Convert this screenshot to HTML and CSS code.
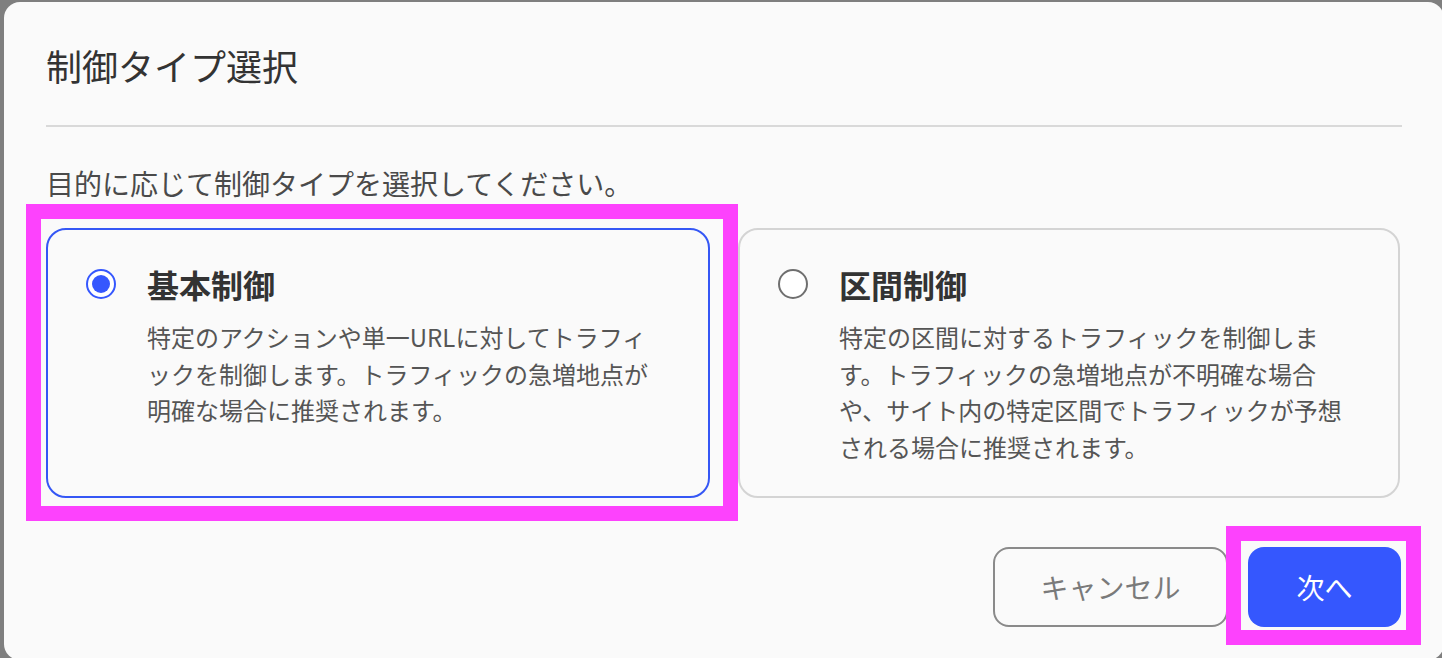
FILE: index.html
```html
<!DOCTYPE html>
<html lang="ja">
<head>
<meta charset="utf-8">
<title>制御タイプ選択</title>
<link rel="stylesheet" href="styles.css">
</head>
<body>
<div class="dialog">
  <h1 class="dialog-title">制御タイプ選択</h1>
  <hr class="divider">
  <p class="lead">目的に応じて制御タイプを選択してください。</p>
  <div class="options">
    <div class="option option-selected">
      <span class="radio radio-on"><span class="radio-dot"></span></span>
      <div class="option-body">
        <div class="option-title">基本制御</div>
        <p class="option-desc">特定のアクションや単一URLに対してトラフィックを制御します。トラフィックの急増地点が明確な場合に推奨されます。</p>
      </div>
      <span class="highlight highlight-card"></span>
    </div>
    <div class="option">
      <span class="radio"></span>
      <div class="option-body">
        <div class="option-title">区間制御</div>
        <p class="option-desc">特定の区間に対するトラフィックを制御します。トラフィックの急増地点が不明確な場合や、サイト内の特定区間でトラフィックが予想される場合に推奨されます。</p>
      </div>
    </div>
  </div>
  <div class="footer">
    <button class="btn btn-cancel">キャンセル</button>
    <div class="btn-wrap">
      <button class="btn btn-primary">次へ</button>
      <span class="highlight highlight-btn"></span>
    </div>
  </div>
</div>
</body>
</html>
```
FILE: styles.css
```css
* { box-sizing: border-box; }

html, body {
  margin: 0;
  padding: 0;
  height: 100%;
  overflow: hidden;
}

body {
  background: #7f7f7f;
  font-family: "Noto Sans CJK JP", "Noto Sans", sans-serif;
  padding: 2px 0 0 4px;
}

.dialog {
  width: 1440px;
  height: 658px;
  background: #fafafa;
  border-radius: 16px;
  padding: 39px 42px 0 42px;
}

.dialog-title {
  margin: 0;
  font-size: 36px;
  line-height: 48px;
  font-weight: 400;
  color: #333;
}

.divider {
  margin: 36px 0 0 0;
  border: 0;
  height: 2px;
  background: #d9d9d9;
}

.lead {
  margin: 36px 0 0 0;
  font-size: 28px;
  line-height: 40px;
  color: #4a4a4a;
}

.options {
  margin-top: 25px;
  display: grid;
  grid-template-columns: 664px 662px;
  column-gap: 28px;
}

.option {
  position: relative;
  height: 270px;
  display: grid;
  grid-template-columns: 30px 1fr;
  column-gap: 31px;
  align-items: start;
  padding: 30px 46px 31px 38px;
  border: 2px solid #d4d4d4;
  border-radius: 20px;
  background: #fafafa;
}

.option-selected {
  border-color: #3557f5;
}

.radio {
  margin-top: 9px;
  width: 30px;
  height: 30px;
  border-radius: 50%;
  border: 2px solid #6f6f6f;
  background: #fff;
  display: flex;
  align-items: center;
  justify-content: center;
}

.radio-on {
  border-color: #3557fe;
}

.radio-dot {
  width: 18px;
  height: 18px;
  border-radius: 50%;
  background: #3557fe;
}

.option-title {
  font-size: 32px;
  line-height: 48px;
  font-weight: 700;
  color: #333;
}

.option-desc {
  margin: 11px 0 0 0;
  font-size: 24px;
  line-height: 36.5px;
  color: #555;
}

.footer {
  margin-top: 49px;
  display: flex;
  justify-content: flex-end;
  gap: 20px;
  padding-right: 1px;
}

.btn {
  height: 80px;
  border-radius: 16px;
  font-family: "Noto Sans CJK JP", "Noto Sans", sans-serif;
  font-size: 28px;
  cursor: pointer;
}

.btn-cancel {
  width: 235px;
  background: #fafafa;
  border: 2px solid #8a8a8a;
  color: #7a7a7a;
}

.btn-wrap {
  position: relative;
}

.btn-primary {
  display: block;
  width: 153px;
  background: #3557fe;
  border: 0;
  color: #fff;
}

.highlight {
  position: absolute;
  border: 15px solid #fd42fd;
  pointer-events: none;
}

.highlight-card {
  left: -22px;
  right: -30px;
  top: -26px;
  bottom: -25px;
}

.highlight-btn {
  left: -22px;
  right: -20px;
  top: -21px;
  bottom: -18px;
}
```
